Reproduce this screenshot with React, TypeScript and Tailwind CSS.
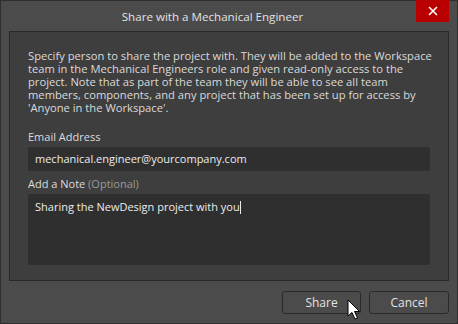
export default function App() {
  return (
    <div className="w-[458px] h-[324px] bg-[#4b4b4b] border border-[#2f2f2f] flex flex-col relative font-['Open_Sans',sans-serif] text-[#dcdcdc] select-none">
      {/* Title bar */}
      <div className="h-[30px] flex items-start">
        <div className="flex-1 text-center text-[11.6px] leading-[31px] text-[#e2e2e2] pl-[8px]">
          Share with a Mechanical Engineer
        </div>
        <button className="w-[33px] h-[22px] mr-[8px] -mt-px bg-[#b80000] flex items-center justify-center">
          <svg width="10" height="10" viewBox="0 0 10 10">
            <path d="M1 1L9 9M9 1L1 9" stroke="#ffffff" strokeWidth="1.6" />
          </svg>
        </button>
      </div>

      {/* Content panel */}
      <div className="mx-[8px] h-[250px] bg-[#3e3e3e] border border-[#2a2a2a] px-[18px] pt-[17px] text-[11px]">
        <p className="leading-[13px] text-[#dadada] text-[11.2px] whitespace-nowrap">
          Specify person to share the project with. They will be added to the Workspace
          <br />
          team in the Mechanical Engineers role and given read-only access to the
          <br />
          project. Note that as part of the team they will be able to see all team
          <br />
          members, components, and any project that has been set up for access by
          <br />
          'Anyone in the Workspace'.
        </p>

        <div className="mt-[16px] leading-[13px]">Email Address</div>
        <div className="mt-[4px] h-[24px] bg-[#2f2f2f] rounded-[2px] px-[7px] flex items-center text-[#ececec]">
          mechanical.engineer@yourcompany.com
        </div>

        <div className="mt-[6px] leading-[13px]">
          Add a Note <span className="text-[#9a9a9a]">(Optional)</span>
        </div>
        <div className="mt-[4px] h-[71px] bg-[#2f2f2f] rounded-[2px] px-[7px] pt-[6px] text-[#ececec] leading-[13px]">
          Sharing the NewDesign project with you
          <span className="inline-block w-px h-[13px] bg-[#ececec] align-middle -mt-[2px]"></span>
        </div>
      </div>

      {/* Buttons */}
      <div className="flex justify-end gap-[8px] mt-[10px] mr-[8px]">
        <button className="w-[79px] h-[23px] border border-[#2a2a2a] rounded-[3px] bg-[#4b4b4b] text-[12px] text-[#e2e2e2]">
          Share
        </button>
        <button className="w-[80px] h-[23px] border border-[#2a2a2a] rounded-[3px] bg-[#4b4b4b] text-[12px] text-[#e2e2e2]">
          Cancel
        </button>
      </div>

      {/* Mouse cursor */}
      <svg className="absolute left-[346px] top-[298px]" width="14" height="22" viewBox="0 0 14 22">
        <path d="M1 1L1 17L5 13.5L8 20L10.5 19L7.5 12.5L12.5 12.5Z" fill="#ffffff" stroke="#000000" strokeWidth="1" strokeLinejoin="round" />
      </svg>
    </div>
  )
}
